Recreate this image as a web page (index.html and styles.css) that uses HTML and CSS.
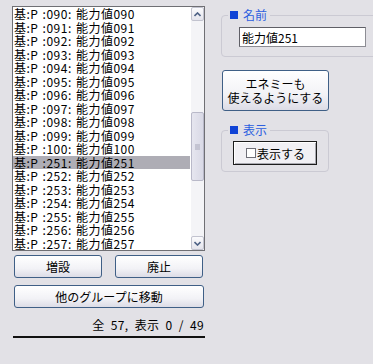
FILE: index.html
```html
<!DOCTYPE html>
<html lang="ja">
  <head>
    <meta charset="UTF-8" />
    <title>能力値</title>
    <link rel="stylesheet" href="styles.css">
  </head>
  <body>
    <div class="window">
      <div class="left">
        <div class="listbox">
          <ul class="items">
            <li>基:P :090: 能力値090</li>
            <li>基:P :091: 能力値091</li>
            <li>基:P :092: 能力値092</li>
            <li>基:P :093: 能力値093</li>
            <li>基:P :094: 能力値094</li>
            <li>基:P :095: 能力値095</li>
            <li>基:P :096: 能力値096</li>
            <li>基:P :097: 能力値097</li>
            <li>基:P :098: 能力値098</li>
            <li>基:P :099: 能力値099</li>
            <li>基:P :100: 能力値100</li>
            <li class="selected">基:P :251: 能力値251</li>
            <li>基:P :252: 能力値252</li>
            <li>基:P :253: 能力値253</li>
            <li>基:P :254: 能力値254</li>
            <li>基:P :255: 能力値255</li>
            <li>基:P :256: 能力値256</li>
            <li>基:P :257: 能力値257</li>
          </ul>
          <div class="scrollbar">
            <div class="arrow">
              <svg width="7" height="5" viewBox="0 0 7 5"><polyline points="0.5,4 3.5,1 6.5,4" fill="none" stroke="#4d6185" stroke-width="1.6"/></svg>
            </div>
            <div class="track">
              <div class="thumb"><span class="grip"></span></div>
            </div>
            <div class="arrow">
              <svg width="7" height="5" viewBox="0 0 7 5"><polyline points="0.5,1 3.5,4 6.5,1" fill="none" stroke="#4d6185" stroke-width="1.6"/></svg>
            </div>
          </div>
        </div>

        <div class="button-row">
          <button class="btn">増設</button>
          <button class="btn">廃止</button>
        </div>
        <button class="btn wide">他のグループに移動</button>

        <div class="status">全 57, 表示 0 / 49</div>
        <div class="rule"></div>
      </div>

      <div class="right">
        <fieldset class="group name-group">
          <legend><span class="mark"></span>名前</legend>
          <input class="name-input" type="text" value="能力値251" />
        </fieldset>

        <button class="btn enemy">エネミーも<br />使えるようにする</button>

        <fieldset class="group show-group">
          <legend><span class="mark"></span>表示</legend>
          <button class="toggle"><span class="check"></span>表示する</button>
        </fieldset>
      </div>
    </div>
  </body>
</html>
```

FILE: styles.css
```css
* {
  font-family: "Noto Sans CJK JP", "Liberation Sans", sans-serif;
  box-sizing: border-box;
}
body {
  margin: 0;
  width: 373px;
  height: 364px;
  overflow: hidden;
  background-color: #e2e1e6;
  font-size: 12px;
  color: #000;
}
.window {
  display: flex;
}
.left {
  width: 194px;
  margin-left: 12px;
  padding-top: 6px;
  display: flex;
  flex-direction: column;
}
.listbox {
  display: flex;
  height: 245px;
  border: 1px solid #6f6f74;
  background-color: #fff;
}
.items {
  flex: 1;
  margin: 0;
  padding: 0;
  list-style: none;
  overflow: hidden;
}
.items li {
  height: 13.5px;
  line-height: 13.5px;
  padding-left: 1px;
  letter-spacing: 0.5px;
  word-spacing: 1px;
  white-space: nowrap;
}
.items li.selected {
  background-color: #aeadb5;
}
.scrollbar {
  width: 14px;
  display: flex;
  flex-direction: column;
  background-color: #f4f4f7;
  border-left: 1px solid #fff;
}
.arrow {
  height: 14px;
  display: flex;
  align-items: center;
  justify-content: center;
  background: linear-gradient(#fbfbfd, #e4e4ec);
  border: 1px solid #c2c3cf;
  border-radius: 2px;
}
.track {
  flex: 1;
}
.thumb {
  margin-top: 91px;
  height: 69px;
  display: flex;
  align-items: center;
  justify-content: center;
  background: linear-gradient(90deg, #e6e6ef, #d9d9e6);
  border: 1px solid #b9b9c9;
  border-radius: 2px;
}
.grip {
  width: 5px;
  height: 6px;
  background-color: #c4c4d2;
}
.button-row {
  display: flex;
  justify-content: space-between;
  padding: 0 2px;
  margin-top: 4px;
}
.btn {
  height: 23px;
  padding: 0;
  font-size: 12px;
  color: #000;
  border: 1px solid #3f5f86;
  border-radius: 3px;
  background: linear-gradient(#ffffff, #f2f2f6 60%, #dcdce6);
}
.button-row .btn {
  width: 88px;
}
.wide {
  width: 190px;
  margin: 7px 0 0 2px;
}
.status {
  margin-top: 10px;
  height: 14px;
  line-height: 14px;
  text-align: right;
  padding-right: 1px;
  letter-spacing: 0.4px;
  word-spacing: 3px;
}
.rule {
  margin: 4px 0 0 1px;
  width: 192px;
  border-top: 2px solid #111;
}
.right {
  margin-left: 16px;
  padding-top: 8px;
  display: flex;
  flex-direction: column;
  align-items: flex-start;
}
.group {
  margin: 0;
  border: 1px solid #cbcad3;
  border-radius: 4px;
}
.group legend {
  display: flex;
  align-items: center;
  height: 14px;
  line-height: 14px;
  padding: 0 3px 0 2px;
  color: #2d5fe0;
}
.mark {
  width: 8px;
  height: 8px;
  margin-right: 5px;
  background-color: #1043d6;
}
.name-group {
  width: 170px;
  padding: 5px 0 9px 17px;
}
.name-group legend {
  margin-left: -11px;
}
.name-input {
  display: block;
  width: 127px;
  height: 20px;
  padding: 0 2px;
  font-size: 12px;
  border: 1px solid #5f5f66;
  border-right-color: #8d8d94;
  border-bottom-color: #8d8d94;
  background-color: #fff;
  outline: none;
}
.enemy {
  width: 107px;
  height: 41px;
  margin: 13px 0 0 1px;
  line-height: 14px;
}
.show-group {
  width: 108px;
  margin-top: 12px;
  padding: 4px 0 6px 11px;
}
.show-group legend {
  margin-left: -5px;
}
.toggle {
  display: flex;
  align-items: center;
  width: 84px;
  height: 24px;
  padding: 0 0 0 12px;
  font-size: 12px;
  color: #000;
  border: 1px solid #1c1c1c;
  box-shadow: inset 1px 1px 0 #fff, inset -1px -1px 0 #a9a9b0;
  background-color: #f1f0f4;
}
.check {
  width: 10px;
  height: 10px;
  margin-right: 1px;
  border: 1px solid #6f6f78;
  background-color: #fff;
}
```
